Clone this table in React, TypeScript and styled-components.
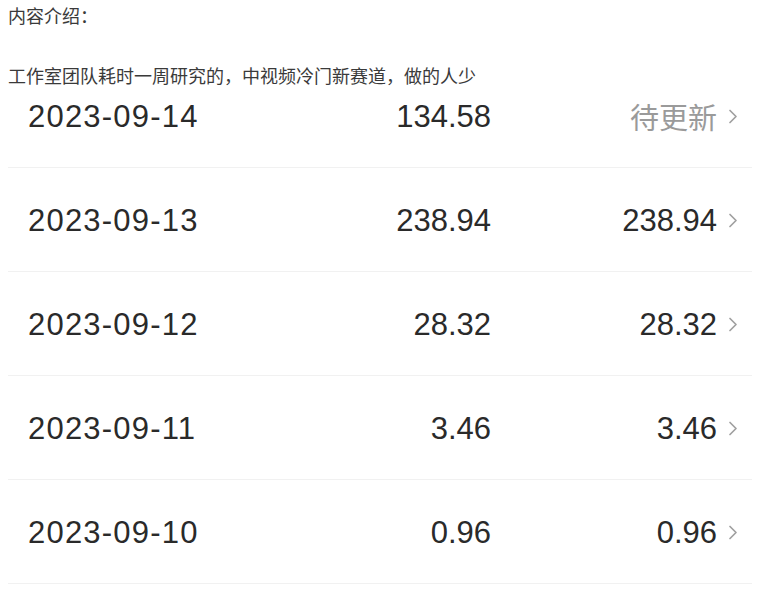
import { createGlobalStyle, styled } from "styled-components";

const GlobalStyle = createGlobalStyle`
  html, body {
    margin: 0;
    padding: 0;
    background: #fff;
  }
  body {
    font-family: "Noto Sans CJK SC", "Liberation Sans", sans-serif;
  }
`;

const Page = styled.div`
  width: 772px;
  height: 598px;
  overflow: hidden;
  padding: 0 8px;
  box-sizing: border-box;
`;

const Intro = styled.p<{ $gap?: number }>`
  margin: ${(p) => p.$gap ?? 0}px 0 0;
  font-size: 18px;
  line-height: 30px;
  color: #3a3a3a;
`;

const Shot = styled.div`
  width: 744px;
  display: flex;
  flex-direction: column;
`;

const Row = styled.div<{ $cropped?: boolean }>`
  display: grid;
  grid-template-columns: 1fr auto 247px;
  align-items: center;
  height: ${(p) => (p.$cropped ? 78 : 104)}px;
  padding: ${(p) => (p.$cropped ? "0 14px 24px 20px" : "2px 14px 0 20px")};
  box-sizing: border-box;
  border-bottom: 1px solid #f1f1f1;
  font-family: "Liberation Sans", "Noto Sans CJK SC", sans-serif;
  font-size: 31px;
  line-height: 1;
  color: #2a2a2a;
`;

const DateCell = styled.span`
  letter-spacing: 1.2px;
`;

const Amount = styled.span`
  text-align: right;
`;

const Settled = styled.span<{ $pending?: boolean }>`
  display: flex;
  justify-content: flex-end;
  align-items: center;
  gap: 11px;
  color: ${(p) => (p.$pending ? "#9a9a9a" : "#2a2a2a")};
  font-family: ${(p) =>
    p.$pending
      ? `"Noto Sans CJK SC", sans-serif`
      : `"Liberation Sans", sans-serif`};
  font-size: ${(p) => (p.$pending ? 29 : 31)}px;
`;

const Chevron = () => (
  <svg width="10" height="15" viewBox="0 0 10 15">
    <path
      d="M2 1.5 L8 7.5 L2 13.5"
      fill="none"
      stroke="#a0a0a0"
      strokeWidth="1.7"
      strokeLinecap="round"
      strokeLinejoin="round"
    />
  </svg>
);

const rows = [
  { date: "2023-09-14", amount: "134.58", settled: "待更新", pending: true },
  { date: "2023-09-13", amount: "238.94", settled: "238.94" },
  { date: "2023-09-12", amount: "28.32", settled: "28.32" },
  { date: "2023-09-11", amount: "3.46", settled: "3.46" },
  { date: "2023-09-10", amount: "0.96", settled: "0.96" },
];

const App = () => {
  return (
    <Page>
      <GlobalStyle />
      <Intro>内容介绍：</Intro>
      <Intro $gap={30}>工作室团队耗时一周研究的，中视频冷门新赛道，做的人少</Intro>
      <Shot>
        {rows.map((row, i) => (
          <Row key={row.date} $cropped={i === 0}>
            <DateCell>{row.date}</DateCell>
            <Amount>{row.amount}</Amount>
            <Settled $pending={row.pending}>
              {row.settled}
              <Chevron />
            </Settled>
          </Row>
        ))}
      </Shot>
    </Page>
  );
};

export default App;
